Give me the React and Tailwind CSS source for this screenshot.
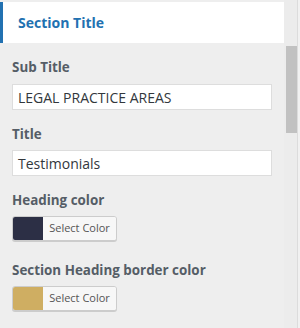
export default function App() {
  const font = { fontFamily: '"Open Sans", "Noto Sans", sans-serif' };
  return (
    <div className="w-[300px] h-[328px] bg-[#eeeeee] flex overflow-hidden" style={font}>
      <div className="w-[284px] flex flex-col">
        <div className="mt-[2px] h-[41px] bg-white border-l-[3px] border-[#2271b1] flex items-center pl-[15px]">
          <span className="text-[14px] font-bold text-[#2271b1] leading-none">Section Title</span>
        </div>
        <div className="pl-[12px] pt-[14px] flex flex-col">
          <div className="h-[20px] flex items-center text-[13.4px] font-bold text-[#555d66]">Sub Title</div>
          <div className="mt-[7px] w-[260px] h-[26px] bg-white border border-[#dddddd] flex items-center pl-[5px] text-[14px] text-[#32373c]">LEGAL PRACTICE AREAS</div>
          <div className="mt-[14px] h-[20px] flex items-center text-[13.4px] font-bold text-[#555d66]">Title</div>
          <div className="mt-[6px] w-[260px] h-[26px] bg-white border border-[#dddddd] flex items-center pl-[5px] text-[14px] text-[#32373c]">Testimonials</div>
          <div className="mt-[14px] h-[20px] flex items-center text-[13.4px] font-bold text-[#555d66]">Heading color</div>
          <div className="mt-[6px] w-[105px] h-[25px] flex bg-[#f7f7f7] border border-[#cccccc] rounded-[3px] shadow-[0_1px_0_#cccccc] overflow-hidden">
            <div className="w-[30px] h-full bg-[#2c2f45]"></div>
            <div className="flex-1 flex items-center justify-center text-[11px] text-[#555555] bg-[#f7f7f7]">Select Color</div>
          </div>
          <div className="mt-[19px] h-[20px] flex items-center text-[13.4px] font-bold text-[#555d66]">Section Heading border color</div>
          <div className="mt-[6px] w-[105px] h-[25px] flex bg-[#f7f7f7] border border-[#cccccc] rounded-[3px] shadow-[0_1px_0_#cccccc] overflow-hidden">
            <div className="w-[30px] h-full bg-[#cfae62]"></div>
            <div className="flex-1 flex items-center justify-center text-[11px] text-[#555555] bg-[#f7f7f7]">Select Color</div>
          </div>
        </div>
      </div>
      <div className="w-[13px] bg-[#ececec] pl-[2px] pt-[46px]">
        <div className="w-[11px] h-[87px] bg-[#c1c1c1]"></div>
      </div>
      <div className="w-[1px] bg-[#dcdcdc]"></div>
      <div className="flex-1 bg-[#f1f1f1]"></div>
    </div>
  );
}
